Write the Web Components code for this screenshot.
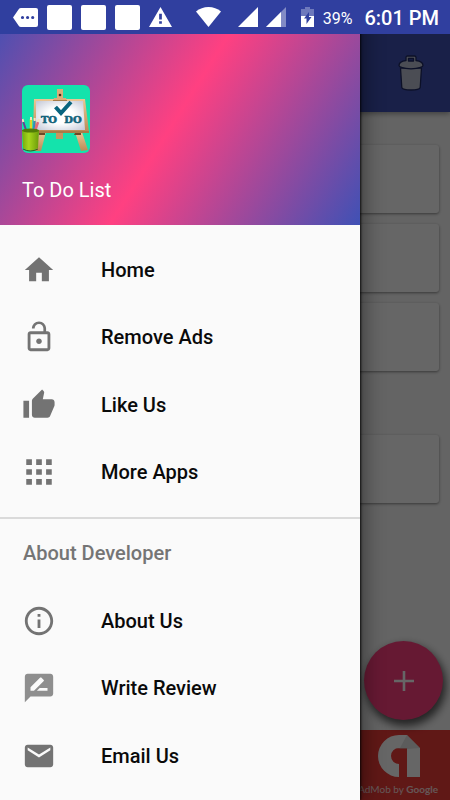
<!DOCTYPE html>
<html lang="en">
<head>
<meta charset="utf-8">
<meta name="viewport" content="width=device-width, initial-scale=1">
<title>To Do List</title>
<style>
  html, body { margin: 0; height: 100%; }
  body { font-family: Roboto, "Liberation Sans", sans-serif; background: #fafafa; }
</style>
</head>
<body>
<todo-app>
  <status-bar slot="status" battery="39%" time="6:01 PM"></status-bar>
  <task-screen slot="screen">
    <task-card></task-card>
    <task-card></task-card>
    <task-card></task-card>
    <task-card class="later"></task-card>
    <ad-banner slot="ad"></ad-banner>
  </task-screen>
  <nav-drawer slot="drawer">
    <drawer-header slot="header">To Do List</drawer-header>
    <nav-group>
      <nav-item icon="home">Home</nav-item>
      <nav-item icon="lock">Remove Ads</nav-item>
      <nav-item icon="like">Like Us</nav-item>
      <nav-item icon="apps">More Apps</nav-item>
    </nav-group>
    <nav-group heading="About Developer">
      <nav-item icon="info">About Us</nav-item>
      <nav-item icon="review">Write Review</nav-item>
      <nav-item icon="mail">Email Us</nav-item>
    </nav-group>
  </nav-drawer>
</todo-app>

<script>
const define = (name, render) => customElements.define(name, class extends HTMLElement {
  constructor() {
    super();
    this.attachShadow({ mode: "open" });
  }
  connectedCallback() {
    this.shadowRoot.innerHTML = render(this);
  }
});

/* Layers: screen, scrim, drawer, status bar share one grid cell. */
define("todo-app", () => `
  <style>
    :host { display: grid; grid-template: minmax(100vh, auto) / minmax(0, 1fr); height: 100vh; overflow: hidden; }
    ::slotted(*), .scrim { grid-area: 1 / 1; }
    ::slotted([slot="screen"]) { z-index: 0; }
    .scrim { z-index: 1; background: rgba(0, 0, 0, .6); }
    ::slotted([slot="drawer"]) { z-index: 2; width: 80%; }
    ::slotted([slot="status"]) { z-index: 3; align-self: start; }
  </style>
  <slot name="screen"></slot>
  <div class="scrim"></div>
  <slot name="drawer"></slot>
  <slot name="status"></slot>
`);

define("status-bar", el => `
  <style>
    :host { display: flex; justify-content: space-between; align-items: center; box-sizing: border-box; height: 34px; padding: 0 11px 0 13px; background: #303f9f; color: #fff; }
    div { display: flex; align-items: center; }
    .notes { gap: 9px; }
    .square { width: 25px; height: 25px; border-radius: 2px; background: #fff; }
    .signals { gap: 8px; margin: 0 15px 0 17px; }
    svg { display: block; fill: #fff; }
    .level { font-size: 16px; margin: 2px 12px 0 9px; }
    .time { font-size: 20px; font-weight: 500; margin-top: 2px; }
  </style>
  <div class="notes">
    <svg width="25" height="19" viewBox="0 0 25 19"><path fill-rule="evenodd" d="M8 0h15q2 0 2 2v15q0 2-2 2H8q-1.500 0-2.300-1.200L0 9.500 5.700 1.200Q6.500 0 8 0zM9.500 7.900a1.600 1.600 0 1 0 0 3.200 1.600 1.600 0 0 0 0-3.200zM14.600 7.900a1.600 1.600 0 1 0 0 3.200 1.600 1.600 0 0 0 0-3.200zM19.700 7.900a1.600 1.600 0 1 0 0 3.200 1.600 1.600 0 0 0 0-3.200z"/></svg>
    <span class="square"></span><span class="square"></span><span class="square"></span>
    <svg width="23" height="20" viewBox="1 2 22 19"><path d="M1 21h22L12 2 1 21zm12.300-3h-2.600v-2.500h2.600V18zm0-4h-2.600V8.500h2.600V14z"/></svg>
  </div>
  <div>
    <svg width="25" height="20" viewBox="0 0 25 20"><path d="M12.500 20 25 4.500C21.500 1.600 17.200 0 12.500 0S3.500 1.600 0 4.500z"/></svg>
    <div class="signals">
      <svg width="20" height="20" viewBox="0 0 20 20"><path d="M0 20h20V0z"/></svg>
      <svg width="20" height="20" viewBox="0 0 20 20"><path opacity=".4" d="M0 20h20V0z"/><path d="M0 20h15V5z"/></svg>
    </div>
    <svg width="13" height="20" viewBox="0 0 13 20"><path opacity=".3" d="M4 0h5v2h4v7H0V2h4z"/><path d="M0 9h13v11H0z"/><path fill="#303f9f" d="M8 5v5h2.500L5.500 17v-5.500H3z"/></svg>
    <span class="level">${el.getAttribute("battery")}</span>
    <span class="time">${el.getAttribute("time")}</span>
  </div>
`);

define("task-screen", () => `
  <style>
    :host { display: flex; flex-direction: column; padding-top: 34px; background: #fafafa; }
    header { display: flex; align-items: center; justify-content: flex-end; height: 78px; padding-right: 26px; background: #3f51b5; box-shadow: 0 2px 5px rgba(0, 0, 0, .35); }
    button { border: 0; padding: 0; background: none; cursor: pointer; }
    svg { display: block; }
    main { position: relative; flex: 1; display: flex; flex-direction: column; gap: 11px; padding: 33px 11px 11px; }
    ::slotted(.later) { margin-top: 53px; }
    .add { position: absolute; right: 7px; bottom: 10px; display: grid; place-items: center; width: 79px; height: 79px; border-radius: 50%; background: #ff4081; box-shadow: 2px 5px 9px 1px rgba(0, 0, 0, .65); }
  </style>
  <header>
    <button aria-label="Delete">
      <svg width="26" height="36" viewBox="0 0 26 36" fill="#bcc1d2" stroke="#1f2a63" stroke-width="1.300" stroke-linejoin="round">
        <path d="M2.500 13h21l-1.300 19.500Q21.500 35 13 35T3.800 32.500z"/>
        <path d="M1 10.500q0-4 7-5V2.500Q8 1 9.500 1h7Q18 1 18 2.500v3q7 1 7 5 0 2.500-12 3.300Q1 13 1 10.500z"/>
        <path fill="#3f51b5" d="M10.500 3.500h5V6h-5z"/>
      </svg>
    </button>
  </header>
  <main>
    <slot></slot>
    <button class="add" aria-label="Add task">
      <svg width="20" height="20" viewBox="0 0 20 20" fill="#fff"><path d="M8.700 0h2.600v8.700H20v2.600h-8.700V20H8.700v-8.700H0V8.700h8.700z"/></svg>
    </button>
  </main>
  <slot name="ad"></slot>
`);

define("task-card", () => `
  <style>
    :host { display: block; height: 68px; border-radius: 3px; background: #fff; box-shadow: 0 1px 3px rgba(0, 0, 0, .45); }
  </style>
  <slot></slot>
`);

define("ad-banner", () => `
  <style>
    :host { display: block; background: #f13c38; color: #fff; }
    a { display: flex; flex-direction: column; align-items: flex-end; box-sizing: border-box; height: 70px; padding: 5px 12px 0 0; color: inherit; text-decoration: none; font: 10px/14px Lato, sans-serif; }
    svg { margin: 0 18px 5px 0; }
    span { white-space: nowrap; opacity: .8; }
    b { font-weight: 700; }
  </style>
  <a href="#ad">
    <svg width="42" height="42" viewBox="0 0 42 42">
      <path fill="#fff" d="M21 0h8l13 13v29H29V13h-8a8 8 0 0 0 0 16v13A21 21 0 0 1 21 0z"/>
      <path fill="#ccc" d="M29 0 42 13 29 14H19l3-1z" opacity=".5"/>
    </svg>
    <span>AdMob by <b>Google</b></span>
  </a>
`);

define("nav-drawer", () => `
  <style>
    :host { display: block; background: #fafafa; box-shadow: 1px 0 2px rgba(0, 0, 0, .8), 3px 0 20px rgba(0, 0, 0, .45); }
  </style>
  <slot name="header"></slot>
  <nav><slot></slot></nav>
`);

define("drawer-header", () => `
  <style>
    :host { display: flex; flex-direction: column; justify-content: flex-end; gap: 25px; box-sizing: border-box; height: 225px; padding: 0 22px 23px; background: linear-gradient(122deg, #3f51b5, #ff4081 50%, #3f51b5); color: #fff; font-size: 20px; line-height: 24px; }
    svg { display: block; border-radius: 6px; }
  </style>
  <svg width="68" height="68" viewBox="0 0 68 68" role="img" aria-label="To Do">
    <defs>
      <linearGradient id="wood" x2="0" y2="1"><stop stop-color="#ecc795"/><stop offset="1" stop-color="#b98a55"/></linearGradient>
      <linearGradient id="cup"><stop stop-color="#74a80c"/><stop offset=".4" stop-color="#a6d61c"/><stop offset="1" stop-color="#6b9a0a"/></linearGradient>
      <radialGradient id="paper" r=".7"><stop offset=".4" stop-color="#fff"/><stop offset="1" stop-color="#c3c7d6"/></radialGradient>
    </defs>
    <path fill="#14e3ac" d="M0 0h68v68H0z"/>
    <path fill="url(#wood)" d="M17 47h7l-5 19h-6zM53 47h7l6 18-7 1z"/>
    <path fill="#6d4927" d="M17 48h6v2h-6zM53 48h6v2h-7z"/>
    <path fill="#c39661" d="M34 48h7v6h-7z"/>
    <path fill="url(#wood)" d="M12 14h51l4 33H11z"/>
    <path fill="url(#paper)" d="M14 16h47l2 29H14z"/>
    <path fill="#a77c48" d="M11 46h56v2H11z"/>
    <path fill="#d9ae78" d="M35 4h6v9h3l1 3H31l1-3h3z"/>
    <path fill="#a77c48" d="M31 15h14v1H31z"/>
    <circle cx="38" cy="10" r="1.300" fill="#3b2a18"/>
    <path fill="none" stroke="#08647f" stroke-width="4" d="m33.500 22 5.500 6 10-11"/>
    <g font-family="DejaVu Serif, serif" font-weight="700" font-size="10" fill="#14647c" stroke="#14647c" stroke-width=".6" text-anchor="middle">
      <text x="27" y="38">TO</text>
      <text x="51" y="38">DO</text>
    </g>
    <path stroke="#6b3f93" stroke-width="2" d="m1 36 4 12"/>
    <path stroke="#e6cf28" stroke-width="2.500" d="M9 34v14"/>
    <path stroke="#2e8fc0" stroke-width="2" d="m12.500 35-1 13"/>
    <path stroke="#e26a78" stroke-width="2.500" d="m16 37-4 12"/>
    <path stroke="#f6e3c0" stroke-width="2" d="m.5 34 .8 3M9 32v3M12.700 33v3M17 34l-1 3"/>
    <path fill="url(#cup)" d="M0 45q8 3 17 0l-1 18q-8 5-15 0z"/>
    <ellipse cx="8.500" cy="45.500" rx="8.500" ry="2" fill="#517b08"/>
    <path fill="none" stroke="#39561a" d="M1 64q7 4 15 0"/>
  </svg>
  <slot></slot>
`);

define("nav-group", el => {
  const heading = el.getAttribute("heading");
  const count = el.children.length;
  return `
  <style>
    :host { display: block; }
    h2 { margin: 0; padding-left: 23px; border-top: 2px solid #dadada; color: #757575; font-size: 20px; font-weight: 500; line-height: 68px; }
    div { display: grid; grid-template-rows: repeat(${count}, 1fr); height: ${count === 4 ? 270 : 203}px; padding: ${heading ? "0" : "11px 0"}; }
  </style>
  ${heading ? `<h2>${heading}</h2>` : ""}
  <div><slot></slot></div>`;
});

const icons = {
  home: '<path d="M10 20v-6h4v6h5v-8h3L12 3 2 12h3v8z"/>',
  lock: '<path d="M12 17c1.100 0 2-.9 2-2s-.9-2-2-2-2 .9-2 2 .9 2 2 2zm6-9h-1V6c0-2.760-2.240-5-5-5S7 3.240 7 6h1.900c0-1.710 1.390-3.100 3.100-3.100 1.710 0 3.100 1.390 3.100 3.100v2H6c-1.100 0-2 .9-2 2v10c0 1.100.9 2 2 2h12c1.100 0 2-.9 2-2V10c0-1.100-.9-2-2-2zm0 12H6V10h12v10z"/>',
  like: '<path d="M1 21h4V9H1v12zm22-11c0-1.100-.9-2-2-2h-6.310l.95-4.570.03-.32c0-.41-.17-.79-.44-1.060L14.170 1 7.590 7.590C7.220 7.950 7 8.450 7 9v10c0 1.100.9 2 2 2h9c.83 0 1.540-.5 1.840-1.220l3.020-7.050c.09-.23.14-.47.14-.73v-2z"/>',
  apps: '<path d="M3 3h4v4H3zM10 3h4v4h-4zM17 3h4v4h-4zM3 10h4v4H3zM10 10h4v4h-4zM17 10h4v4h-4zM3 17h4v4H3zM10 17h4v4h-4zM17 17h4v4h-4z"/>',
  info: '<path d="M11 17h2v-6h-2v6zm1-15C6.480 2 2 6.480 2 12s4.480 10 10 10 10-4.480 10-10S17.520 2 12 2zm0 18c-4.410 0-8-3.590-8-8s3.590-8 8-8 8 3.590 8 8-3.590 8-8 8zM11 9h2V7h-2v2z"/>',
  review: '<path opacity=".8" d="M20 2H4c-1.100 0-1.990.9-1.990 2L2 22l4-4h14c1.100 0 2-.9 2-2V4c0-1.100-.9-2-2-2zM6 14v-2.470l6.880-6.880c.2-.2.510-.2.710 0l1.770 1.770c.2.2.2.510 0 .71L8.470 14H6zm12 0h-7.500l2-2H18v2z"/>',
  mail: '<path d="M20 4H4c-1.100 0-1.990.9-1.990 2L2 18c0 1.100.9 2 2 2h16c1.100 0 2-.9 2-2V6c0-1.100-.9-2-2-2zm0 4-8 5-8-5V6l8 5 8-5v2z"/>'
};

define("nav-item", el => {
  const name = el.getAttribute("icon");
  return `
  <style>
    :host { display: grid; }
    a { display: flex; align-items: center; gap: 45px; padding: 0 22px; color: #0a0a0a; text-decoration: none; font-size: 20px; font-weight: 500; line-height: 24px; }
    svg { flex: none; fill: #737373; }
  </style>
  <a href="#${name}">
    <svg width="34" height="34" viewBox="0 0 24 24" aria-hidden="true">${icons[name]}</svg>
    <slot></slot>
  </a>`;
});
</script>
</body>
</html>
